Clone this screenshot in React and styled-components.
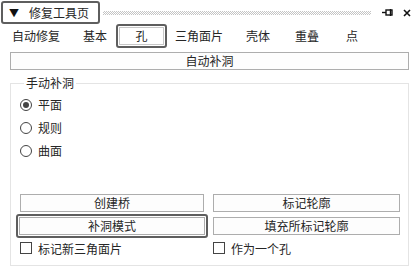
import React from 'react';
import styled, { createGlobalStyle } from 'styled-components';

const GlobalStyle = createGlobalStyle`
  html, body {
    margin: 0;
    padding: 0;
    background: #ffffff;
  }
  * {
    box-sizing: border-box;
  }
`;

const Panel = styled.div`
  width: 419px;
  height: 269px;
  background: #ffffff;
  font-family: "Noto Sans CJK SC", "Microsoft YaHei", sans-serif;
  font-size: 12px;
  color: #262626;
  display: flex;
  flex-direction: column;
  overflow: hidden;
`;

const TitleBar = styled.div`
  display: flex;
  align-items: center;
  height: 24px;
  padding: 1px 4px 0 1px;
  gap: 3px;
`;

const TitleBox = styled.div`
  display: flex;
  align-items: center;
  gap: 10px;
  height: 23px;
  width: 99px;
  padding-left: 6px;
  border: 2px solid #5e5e5e;
  border-radius: 3px;
`;

const Caret = styled.span`
  font-size: 10px;
  line-height: 1;
  color: #111;
`;

const Gripper = styled.div`
  flex: 1;
  height: 4px;
  margin-right: 6px;
  background-image:
    linear-gradient(45deg, #c4c4c4 25%, transparent 25%, transparent 75%, #c4c4c4 75%),
    linear-gradient(45deg, #c4c4c4 25%, transparent 25%, transparent 75%, #c4c4c4 75%);
  background-size: 2px 2px;
  background-position: 0 0, 1px 1px;
`;

const TitleIcon = styled.span`
  display: flex;
  align-items: center;
  justify-content: center;
  width: 16px;
  height: 16px;
`;

const TabRow = styled.div`
  display: flex;
  align-items: center;
  height: 24px;
  padding-left: 12px;
`;

const Tab = styled.div`
  width: ${p => p.$w}px;
  flex: none;
  line-height: 18px;
`;

const Highlight = styled.div`
  border: 2px solid #5e5e5e;
  border-radius: 3px;
  padding: 1px;
  display: ${p => (p.$block ? 'block' : 'inline-block')};
`;

const ActiveTab = styled.div`
  width: 45px;
  height: 18px;
  border: 1px solid #c8c8c8;
  text-align: center;
  line-height: 16px;
`;

const Body = styled.div`
  flex: 1;
  display: flex;
  flex-direction: column;
  padding: 4px 10px 3px 10px;
`;

const Button = styled.div`
  height: 18px;
  border: 1px solid #adadad;
  background: #fdfdfd;
  text-align: center;
  line-height: 16px;
  flex: 1;
`;

const Group = styled.fieldset`
  margin: 6px 0 0 0;
  flex: 1;
  border: 1px solid #e4e4e4;
  padding: 4px 7px 9px 5px;
  display: flex;
  flex-direction: column;
`;

const Legend = styled.legend`
  padding: 0 2px;
  margin-left: 8px;
  line-height: 14px;
`;

const RadioList = styled.div`
  display: flex;
  flex-direction: column;
  gap: 8px;
  margin-top: 3px;
  padding-left: 4px;
`;

const RadioRow = styled.div`
  display: flex;
  align-items: center;
  gap: 6px;
  height: 15px;
`;

const RadioCircle = styled.span`
  width: 12px;
  height: 12px;
  border-radius: 50%;
  border: 1px solid #444;
  display: flex;
  align-items: center;
  justify-content: center;
  &::after {
    content: '';
    width: 6px;
    height: 6px;
    border-radius: 50%;
    background: ${p => (p.$on ? '#444' : 'transparent')};
  }
`;

const ButtonGrid = styled.div`
  margin-top: auto;
  display: grid;
  grid-template-columns: 192px 187px;
  column-gap: 5px;
  row-gap: 2px;
  align-items: center;
`;

const Cell = styled.div`
  display: flex;
  padding: ${p => (p.$pad ? '0 4px' : '0')};
`;

const CheckRow = styled.div`
  display: flex;
  align-items: center;
  gap: 6px;
  padding-left: ${p => (p.$pad ? '4px' : '0')};
  height: 16px;
`;

const CheckBox = styled.span`
  width: 12px;
  height: 12px;
  border: 1px solid #444;
  background: #fff;
`;

function PinIcon() {
  return (
    <svg width="12" height="10" viewBox="0 0 12 10">
      <rect x="4" y="2" width="6" height="5" fill="none" stroke="#111" strokeWidth="1.4" />
      <line x1="0" y1="4.5" x2="4" y2="4.5" stroke="#111" strokeWidth="1.4" />
      <line x1="8.5" y1="1" x2="8.5" y2="8" stroke="#111" strokeWidth="1.4" />
    </svg>
  );
}

function CloseIcon() {
  return (
    <svg width="8" height="8" viewBox="0 0 8 8">
      <path d="M1 1 L7 7 M7 1 L1 7" stroke="#111" strokeWidth="1.6" />
    </svg>
  );
}

const tabs = [
  { label: '自动修复', w: 71 },
  { label: '基本', w: 33 },
];

const tabsAfter = [
  { label: '三角面片', w: 71 },
  { label: '壳体', w: 49 },
  { label: '重叠', w: 51 },
  { label: '点', w: 20 },
];

export default function App() {
  return (
    <>
      <GlobalStyle />
      <Panel>
        <TitleBar>
          <TitleBox>
            <Caret>▼</Caret>
            <span>修复工具页</span>
          </TitleBox>
          <Gripper />
          <TitleIcon><PinIcon /></TitleIcon>
          <TitleIcon><CloseIcon /></TitleIcon>
        </TitleBar>
        <TabRow>
          {tabs.map(t => (
            <Tab key={t.label} $w={t.w}>{t.label}</Tab>
          ))}
          <Highlight>
            <ActiveTab>孔</ActiveTab>
          </Highlight>
          <Tab $w={8} />
          {tabsAfter.map(t => (
            <Tab key={t.label} $w={t.w}>{t.label}</Tab>
          ))}
        </TabRow>
        <Body>
          <Cell><Button>自动补洞</Button></Cell>
          <Group>
            <Legend>手动补洞</Legend>
            <RadioList>
              <RadioRow><RadioCircle $on />平面</RadioRow>
              <RadioRow><RadioCircle />规则</RadioRow>
              <RadioRow><RadioCircle />曲面</RadioRow>
            </RadioList>
            <ButtonGrid>
              <Cell $pad><Button>创建桥</Button></Cell>
              <Cell><Button>标记轮廓</Button></Cell>
              <Highlight $block><Cell><Button>补洞模式</Button></Cell></Highlight>
              <Cell><Button>填充所标记轮廓</Button></Cell>
              <CheckRow $pad><CheckBox />标记新三角面片</CheckRow>
              <CheckRow><CheckBox />作为一个孔</CheckRow>
            </ButtonGrid>
          </Group>
        </Body>
      </Panel>
    </>
  );
}
